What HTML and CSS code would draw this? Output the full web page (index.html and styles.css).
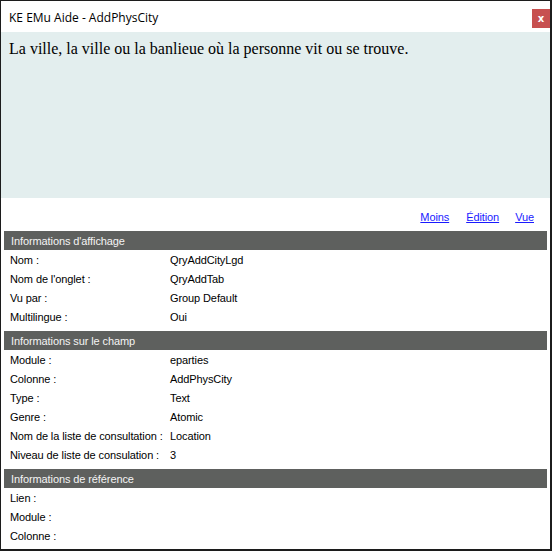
FILE: index.html
```html
<!DOCTYPE html>
<html lang="fr">
<head>
<meta charset="utf-8">
<title>KE EMu Aide - AddPhysCity</title>
<link rel="stylesheet" href="styles.css">
</head>
<body>
<div class="window">
  <div class="titlebar">
    <span class="title">KE EMu Aide - AddPhysCity</span>
    <span class="close">x</span>
  </div>
  <div class="desc">La ville, la ville ou la banlieue où la personne vit ou se trouve.</div>
  <div class="links">
    <a href="#">Moins</a>
    <a href="#">Édition</a>
    <a href="#">Vue</a>
  </div>
  <div class="section">
    <div class="head">Informations d'affichage</div>
    <div class="row"><span class="lbl">Nom :</span><span class="val">QryAddCityLgd</span></div>
    <div class="row"><span class="lbl">Nom de l'onglet :</span><span class="val">QryAddTab</span></div>
    <div class="row"><span class="lbl">Vu par :</span><span class="val">Group Default</span></div>
    <div class="row"><span class="lbl">Multilingue :</span><span class="val">Oui</span></div>
  </div>
  <div class="section">
    <div class="head">Informations sur le champ</div>
    <div class="row"><span class="lbl">Module :</span><span class="val">eparties</span></div>
    <div class="row"><span class="lbl">Colonne :</span><span class="val">AddPhysCity</span></div>
    <div class="row"><span class="lbl">Type :</span><span class="val">Text</span></div>
    <div class="row"><span class="lbl">Genre :</span><span class="val">Atomic</span></div>
    <div class="row"><span class="lbl">Nom de la liste de consultation :</span><span class="val">Location</span></div>
    <div class="row"><span class="lbl">Niveau de liste de consulation :</span><span class="val">3</span></div>
  </div>
  <div class="section">
    <div class="head">Informations de référence</div>
    <div class="row"><span class="lbl">Lien :</span><span class="val"></span></div>
    <div class="row"><span class="lbl">Module :</span><span class="val"></span></div>
    <div class="row"><span class="lbl">Colonne :</span><span class="val"></span></div>
  </div>
</div>
</body>
</html>
```
FILE: styles.css
```css
html, body {
  margin: 0;
  padding: 0;
  background: #ffffff;
}
.window {
  box-sizing: border-box;
  width: 552px;
  height: 551px;
  border: 1px solid #1c1c1c;
  border-right-width: 2px;
  border-bottom-width: 2px;
  background: #ffffff;
  font-family: "Liberation Sans", Arial, sans-serif;
  font-size: 11px;
  letter-spacing: -0.1px;
  color: #000;
  overflow: hidden;
}
.titlebar {
  height: 31px;
  display: flex;
  align-items: center;
  justify-content: space-between;
  padding: 0 0 0 8px;
}
.title {
  font-family: "Open Sans", "Noto Sans", sans-serif;
  font-size: 12px;
  letter-spacing: 0;
  color: #000;
  position: relative;
  top: 1px;
}
.close {
  width: 18px;
  height: 19px;
  background: #c75050;
  color: #fff;
  font-family: "DejaVu Sans", sans-serif;
  font-weight: bold;
  font-size: 10px;
  display: flex;
  align-items: center;
  justify-content: center;
  align-self: flex-start;
  margin-top: 8px;
}
.desc {
  height: 166px;
  background: #e3eeee;
  font-family: "Liberation Serif", "Times New Roman", serif;
  font-size: 16px;
  letter-spacing: 0;
  padding: 8px 8px 0 8px;
  box-sizing: border-box;
}
.links {
  height: 33px;
  display: flex;
  justify-content: flex-end;
  align-items: center;
  gap: 16px;
  padding: 4px 16px 0 0;
  box-sizing: border-box;
}
.links a {
  color: #1a1aff;
  text-decoration: underline;
}
.links a:first-child {
  margin-right: 1px;
}
.section {
  margin: 0 3px 5px 3px;
}
.head {
  height: 19px;
  background: #5e605e;
  color: #f4f4f4;
  display: flex;
  align-items: center;
  padding-left: 7px;
}
.row {
  height: 19px;
  display: flex;
  align-items: center;
  padding-left: 6px;
}
.lbl {
  width: 160px;
  flex: none;
}
```
